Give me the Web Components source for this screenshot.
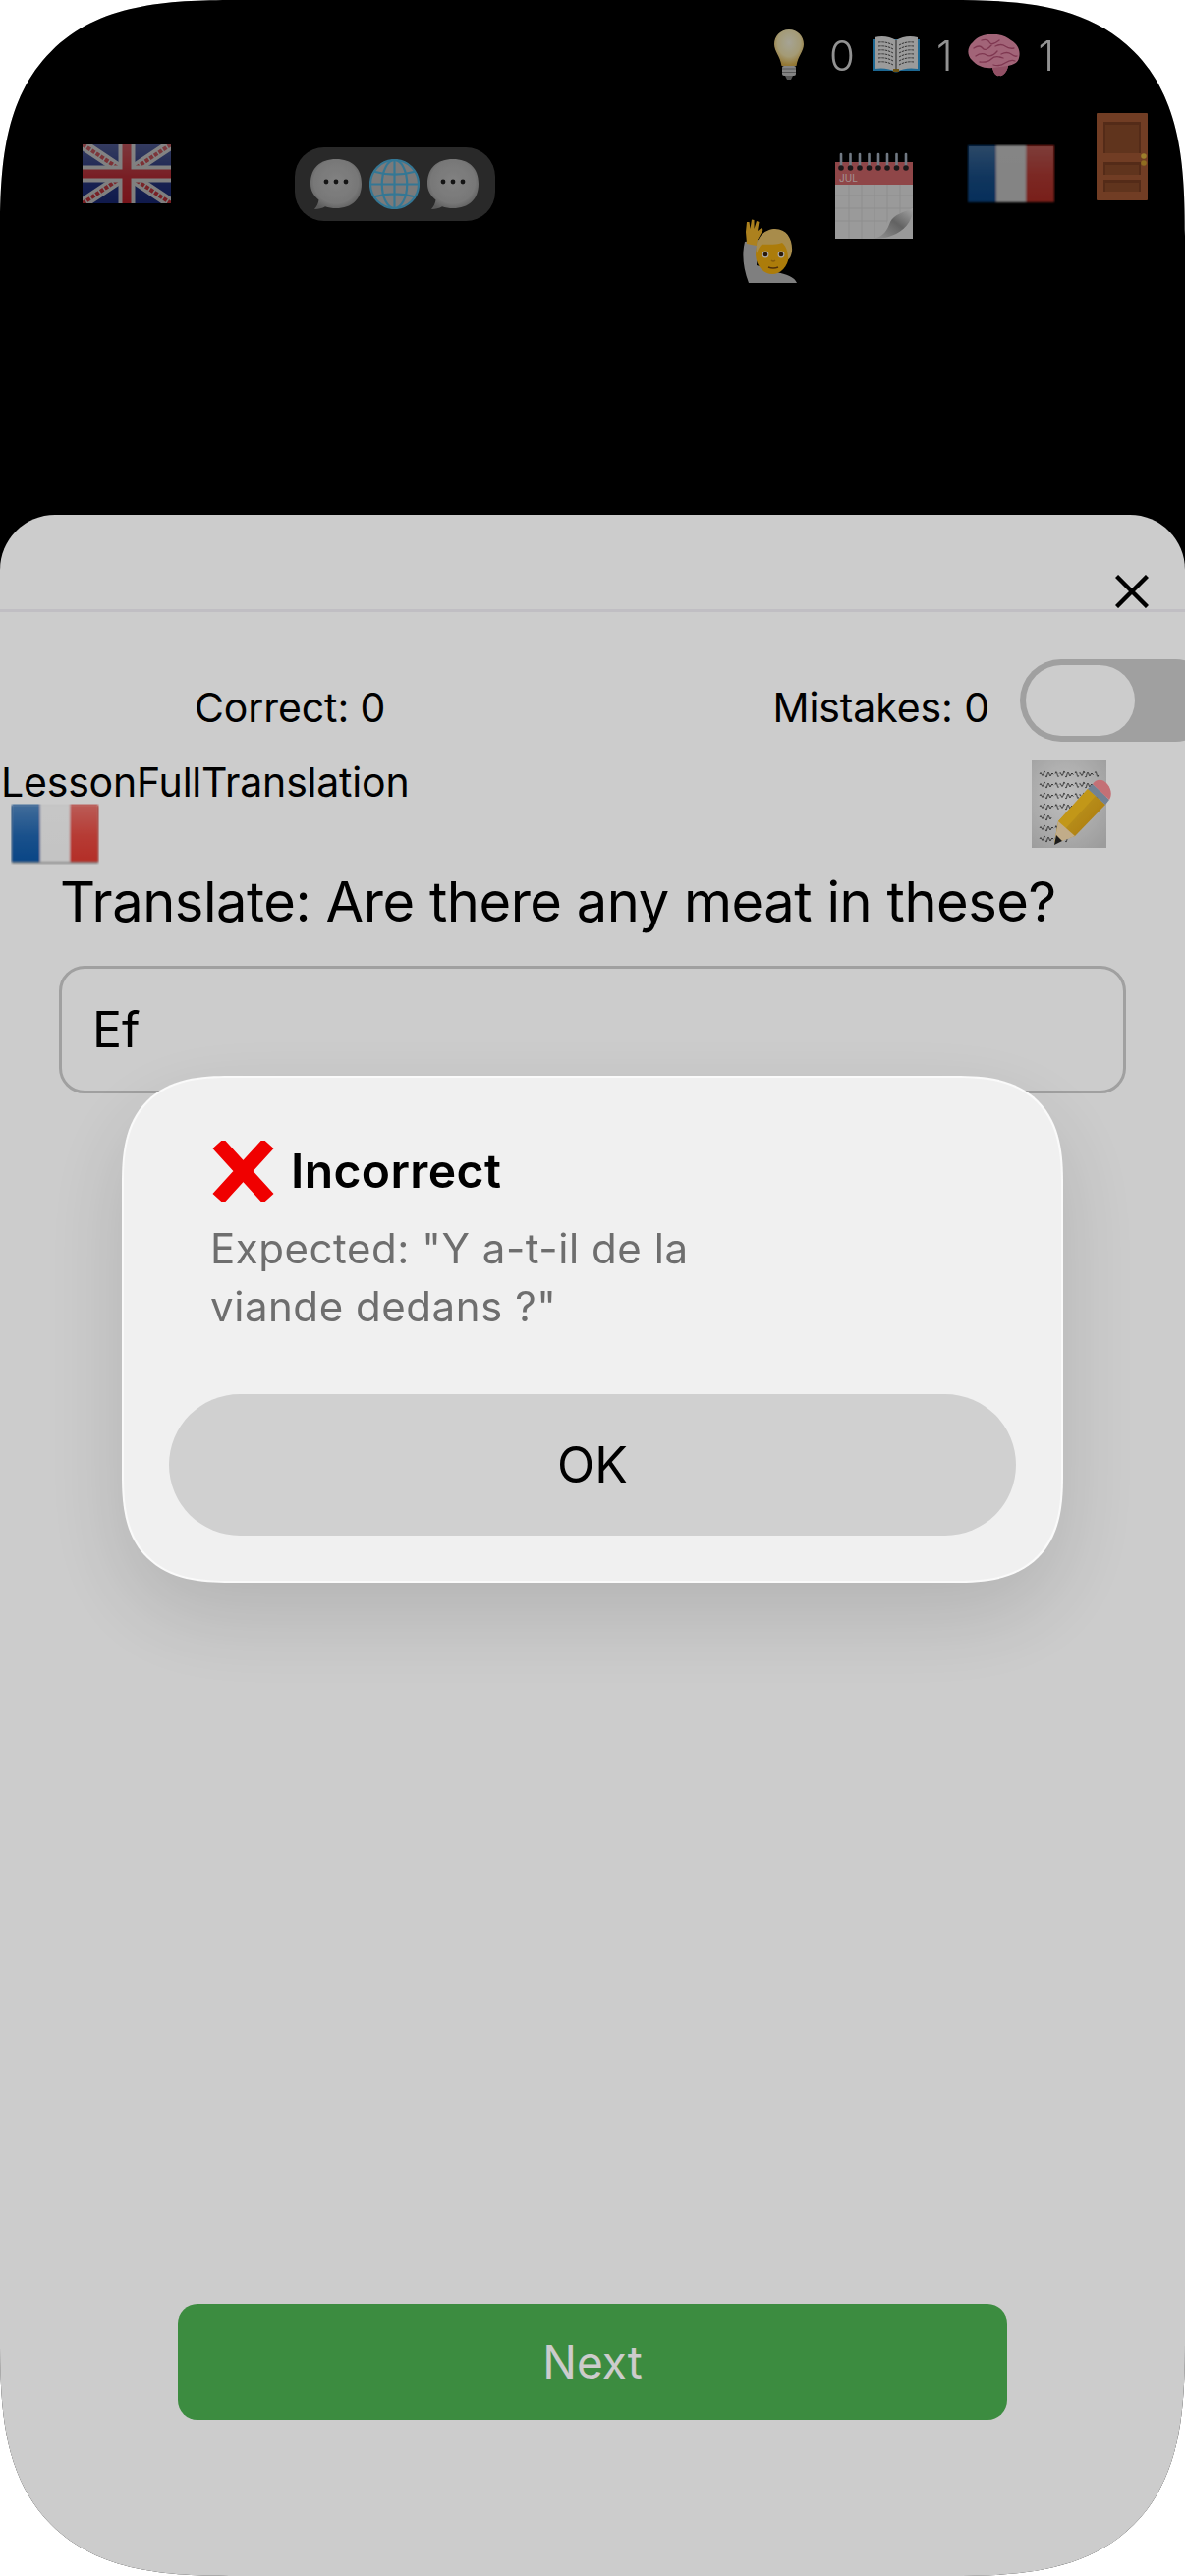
<!DOCTYPE html>
<html lang="en">
<head>
<meta charset="utf-8">
<title>Lesson</title>
<style>
  html, body { margin: 0; padding: 0; background: #fff; }
  body { width: 1206px; height: 2622px; overflow: hidden; font-family: Inter, "Liberation Sans", sans-serif; }
</style>
</head>
<body>
<app-screen>
  <top-canvas slot="top"></top-canvas>
  <lesson-sheet slot="sheet"></lesson-sheet>
  <alert-dialog slot="alert" title-text="Incorrect" ok="OK">Expected: "Y a-t-il de la viande dedans ?"</alert-dialog>
</app-screen>

<script>
const FONT = `Inter, "Liberation Sans", sans-serif`

// handwriting on the memo: wavy lines broken into words
const scribble = [14, 25, 36, 47, 58, 69, 80].map((y, i) => {
  const end = [68, 62, 66, 58, 20, 46, 34][i]
  let d = `M8 ${y}`
  for (let x = 8; x < end; x += 4) d += ` q1 -${2 + (x * 7 % 5)} 2 0 t2 0`
  return `<path d="${d}" fill="none" stroke="#262626" stroke-width=".8" stroke-dasharray="12 3 17 3 9 2"/>`
}).join('')

const calendarGrid = [14, 27, 40, 53, 66].map(x => `<path d="M${x} 34V89" stroke="#cfcfcf" stroke-width=".7"/>`).join('')
  + [45, 58, 71].map(y => `<path d="M0 ${y}H79" stroke="#cfcfcf" stroke-width=".7"/>`).join('')

const rings = [6, 15.5, 25, 34.5, 44, 53, 62.5, 72].map(x =>
  `<path d="M${x} 17V3" stroke="#a8b4c2" stroke-width="2.600" stroke-linecap="round"/><circle cx="${x}" cy="17" r="2.800" fill="#2b2426"/>`).join('')

const bubble = id => `
  <svg viewBox="0 0 52 51" width="52" height="51">
    <defs><radialGradient id="${id}" cx=".5" cy=".45" r=".6"><stop offset="0" stop-color="#c0c0c0"/><stop offset=".72" stop-color="#b2b2b2"/><stop offset="1" stop-color="#868686"/></radialGradient></defs>
    <path d="M26 0C42 0 52 9 52 25S42 50 26 50c-4 0-8 -.6 -11 -1.8C12 50 8 51 4 51c2.500 -3 4 -6 4.500 -9.500C3 37 0 31.500 0 25 0 9 10 0 26 0Z" fill="url(#${id})"/>
    <circle cx="16" cy="23" r="2.400" fill="#1e1e1e"/><circle cx="26" cy="23" r="2.400" fill="#1e1e1e"/><circle cx="36" cy="23" r="2.400" fill="#1e1e1e"/>
  </svg>`

const gloss = id => `
  <linearGradient id="${id}" x1="0" y1="0" x2="0" y2="1"><stop offset="0" stop-color="#fff" stop-opacity=".28"/><stop offset=".55" stop-color="#fff" stop-opacity=".08"/><stop offset="1" stop-color="#fff" stop-opacity="0"/></linearGradient>`

const ART = {
  uk: `<svg viewBox="0 0 90 60" width="90" height="60">
    <defs>${gloss('ukg')}</defs>
    <rect width="90" height="60" fill="#1d2f86"/>
    <path d="M0 0L90 60M90 0L0 60" stroke="#dcdcdc" stroke-width="11"/>
    <path d="M0 0L90 60M90 0L0 60" stroke="#d0343e" stroke-width="4" stroke-dasharray="4 1.500"/>
    <path d="M45 0V60M0 30H90" stroke="#dcdcdc" stroke-width="17"/>
    <path d="M45 0V60M0 30H90" stroke="#cf2530" stroke-width="9"/>
    <rect width="90" height="60" fill="url(#ukg)"/></svg>`,
  fr: `<svg viewBox="0 0 90 62" width="90" height="62">
    <defs><filter id="s" x="-5%" y="-5%" width="110%" height="110%"><feGaussianBlur stdDeviation=".9"/></filter>${gloss('frg')}</defs>
    <rect x="1" y="3" width="88" height="58" fill="#000" opacity=".3" filter="url(#s)"/>
    <g filter="url(#s)"><rect x="1" y="1" width="30" height="58" fill="#0c58a8"/><rect x="30" y="1" width="30" height="58" fill="#f6f6f6"/><rect x="60" y="1" width="29" height="58" fill="#e23a30"/></g>
    <rect x="2" y="2" width="86" height="56" fill="url(#frg)"/></svg>`,
  globe: `<svg viewBox="0 0 52 52" width="51" height="51">
    <circle cx="26" cy="26" r="25" fill="#b6b6b6"/>
    <g fill="none" stroke="#4fb0dc" stroke-width="2.200">
      <circle cx="26" cy="26" r="25"/><ellipse cx="26" cy="26" rx="13" ry="25"/><path d="M26 1V51M1 26H51M5 13Q26 19 47 13M5 39Q26 33 47 39"/>
    </g></svg>`,
  bulb: `<svg viewBox="0 0 30 51" width="30" height="51">
    <defs><radialGradient id="b" cx=".5" cy=".36" r=".62"><stop offset="0" stop-color="#f6f2dc"/><stop offset=".62" stop-color="#f3e5ae"/><stop offset="1" stop-color="#dcb24e"/></radialGradient></defs>
    <path d="M15 0C24 0 30 7 30 15C30 22 24 27 22.500 37H7.500C6 27 0 22 0 15C0 7 6 0 15 0Z" fill="url(#b)"/>
    <rect x="8" y="37" width="14" height="10" rx="2" fill="#c4c4c4"/><path d="M8 40H22M8 43.500H22" stroke="#808080" stroke-width="1"/>
    <path d="M11 47H19L17 51H13Z" fill="#808080"/></svg>`,
  book: `<svg viewBox="0 0 48 39" width="48" height="39">
    <path d="M0 4H48V36H28Q24 39 20 36H0Z" fill="#2c9ada"/>
    <path d="M2 2Q14 -1 24 5Q34 -1 46 2V34Q34 32 24 37Q14 32 2 34Z" fill="#e6e6e6"/>
    <path d="M24 5V37" stroke="#555" stroke-width="1.200"/>
    <g fill="none" stroke="#4a4a4a" stroke-width="1" stroke-dasharray="2.500 .8">
      <path d="M6 7Q14 6 21 10M6 11Q14 10 21 14M6 15Q14 14 21 18M6 19Q14 18 21 22M6 23Q14 22 21 26M6 27Q14 26 21 30"/>
      <path d="M42 7Q34 6 27 10M42 11Q34 10 27 14M42 15Q34 14 27 18M42 19Q34 18 27 22M42 23Q34 22 27 26M42 27Q34 26 27 30"/>
    </g><rect x="21" y="34" width="6" height="3" fill="#a07c20"/></svg>`,
  brain: `<svg viewBox="0 0 53 43" width="53" height="43">
    <path d="M20 0C30 -1 38 1 44 6C51 10 54 17 52 24C51 29 46 31 41 32C40 38 36 43 32 42C28 43 26 38 25 34C17 35 9 32 4 26C-1 21 -1 13 5 8C9 3 14 1 20 0Z" fill="#f095b2"/>
    <path d="M32 42C28 43 26 38 25 34L41 32C40 38 36 43 32 42Z" fill="#d87896"/>
    <g fill="none" stroke="#bc5278" stroke-width="1.300" stroke-linecap="round">
      <path d="M6 14Q12 10 15 14T24 11M8 22Q14 18 19 21T30 17M14 6Q20 4 22 8T32 6M28 12Q34 9 38 12T47 14M12 28Q20 29 24 25T36 24M34 20Q40 17 44 20T50 22M26 31Q32 33 38 29T48 27"/>
    </g></svg>`,
  door: `<svg viewBox="0 0 52 89" width="52" height="89">
    <rect width="52" height="89" rx="1" fill="#a85c36"/>
    <rect x="7" y="9" width="38" height="32" fill="#7c4024"/><rect x="9" y="12" width="34" height="29" fill="#8e4e2c"/>
    <rect x="7" y="50" width="38" height="13" fill="#7c4024"/><rect x="9" y="53" width="34" height="10" fill="#8e4e2c"/>
    <rect x="7" y="68" width="38" height="12" fill="#7c4024"/><rect x="9" y="71" width="34" height="9" fill="#8e4e2c"/>
    <circle cx="48" cy="44" r="2.800" fill="#e8bb40"/><circle cx="48" cy="51" r="2.800" fill="#d4a230"/></svg>`,
  calendar: `<svg viewBox="0 0 79 89" width="79" height="89">
    <defs><linearGradient id="c" x1="0" y1="1" x2="1" y2="0"><stop offset="0" stop-color="#e0e0e0"/><stop offset=".55" stop-color="#929292"/><stop offset="1" stop-color="#f6f6f6"/></linearGradient></defs>
    <rect y="34" width="79" height="55" fill="#e4e4e4"/>${calendarGrid}
    <rect y="11" width="79" height="23" fill="#d4686c"/>${rings}
    <text x="4" y="31" font-family="${FONT}" font-size="10" fill="#f3d9d9">JUL</text>
    <path d="M37 89C47 88 50 78 54 70C58 64 68 62 79 60V89Z" fill="#e4e4e4"/>
    <path d="M38 89C50 87 53 80 56 72C60 64 70 62 79 58C79 68 74 78 62 84C56 87 48 89 38 89Z" fill="url(#c)"/></svg>`,
  person: `<svg viewBox="0 0 55 66" width="55" height="66">
    <path d="M2 24C-1 36 0 50 6 66H55C53 60 44 57 34 55L14 48L16 22Z" fill="#bcbcbc"/>
    <path d="M4 26L3 14L4 4L6.500 4L7.500 11L9 1.500L11.500 2L11.500 11L14 3L16.500 4L15 13L19 10L20.500 12L15 22L14 28Z" fill="#ffc02e"/>
    <path d="M13 38C13 24 20 18 31 18C42 18 48 26 47 38C46 50 38 57 30 57C22 57 14 50 13 38Z" fill="#ffb810"/>
    <path d="M14 36C12 20 22 11 33 11C45 11 51 22 50 34C49 40 47 42 46 42C46 34 44 28 40 25C32 28 22 26 19 27C16 30 15 34 14 36Z" fill="#f8cf70"/>
    <circle cx="23" cy="37" r="3.400" fill="#fff"/><circle cx="23" cy="37" r="2.300" fill="#3c2410"/>
    <circle cx="39" cy="37" r="3.400" fill="#fff"/><circle cx="39" cy="37" r="2.300" fill="#3c2410"/>
    <path d="M26 50Q31 52 36 50" stroke="#7a4a10" stroke-width="1.400" fill="none"/><path d="M29 43Q31 45 33 43" stroke="#c98a10" stroke-width="1.400" fill="none"/></svg>`,
  memo: `<svg viewBox="0 0 81 89" width="81" height="89">
    <defs><radialGradient id="m" cx=".45" cy=".4" r=".75"><stop offset="0" stop-color="#f0f0f0"/><stop offset="1" stop-color="#c4c4c4"/></radialGradient>
    <linearGradient id="p" x1="0" y1="0" x2="1" y2="1"><stop offset="0" stop-color="#f7cc2c"/><stop offset="1" stop-color="#cf8f10"/></linearGradient></defs>
    <rect width="76" height="89" fill="url(#m)"/>${scribble}
    <path d="M23 84L27 62L57 29L75 45L44 77Z" fill="url(#p)"/>
    <path d="M27 62L57 29L65 36L33 71Z" fill="#f3bd1e"/>
    <path d="M23 85L27 62L44 77Z" fill="#f2d8ac"/><path d="M23 86L25 76L31 82Z" fill="#222"/>
    <path d="M57 29L62 24L79 40L75 45Z" fill="#8fa3ba"/>
    <path d="M62 24C66 18 73 19 77 24C81 29 82 35 79 40Z" fill="#f58c94"/></svg>`,
  cross: `<svg viewBox="0 0 63 62" width="63" height="62">
    <path d="M6 3L57 59M57 3L6 59" stroke="#f00000" stroke-width="15"/></svg>`,
  close: `<svg viewBox="0 0 34 34" width="34" height="34">
    <path d="M1.500 1.500L32.500 32.500M32.500 1.500L1.500 32.500" stroke="#000" stroke-width="4.400"/></svg>`
}

class EmojiArt extends HTMLElement {
  constructor () {
    super()
    this.attachShadow({ mode: 'open' })
  }

  connectedCallback () {
    this.shadowRoot.innerHTML = `
    <style>
      :host { display: block; line-height: 0; }
      svg { display: block; }
    </style>
    ${this.getAttribute('name') === 'bubble' ? bubble('bg' + (this.getAttribute('uid') || '')) : ART[this.getAttribute('name')]}
    `
  }
}

class AppScreen extends HTMLElement {
  constructor () {
    super()
    this.attachShadow({ mode: 'open' })
    this.shadowRoot.innerHTML = `
    <style>
      :host {
        display: block;
        position: relative;
        width: 1206px;
        height: 2622px;
        overflow: hidden;
        background: #000;
        border-radius: 240px;
        corner-shape: superellipse(1.5);
      }
      .stack { display: flex; flex-direction: column; height: 100%; }
      .scrim { position: absolute; inset: 0; background: rgba(0, 0, 0, .2); }
    </style>
    <div class="stack">
      <slot name="top"></slot>
      <slot name="sheet"></slot>
    </div>
    <div class="scrim"></div>
    <slot name="alert"></slot>
    `
  }
}

class TopCanvas extends HTMLElement {
  constructor () {
    super()
    this.attachShadow({ mode: 'open' })
    this.shadowRoot.innerHTML = `
    <style>
      :host { display: block; position: relative; height: 524px; flex: none; }
      .dim { position: absolute; inset: 0; opacity: .85; }
      .at { position: absolute; }
      .stats {
        position: absolute;
        left: 788px;
        top: 30px;
        display: flex;
        align-items: flex-start;
        font: 300 42px/51px ${FONT};
        color: #d8d8d8;
      }
      .stats span { margin-top: 1px; }
      .pill {
        position: absolute;
        left: 300px;
        top: 150px;
        width: 204px;
        height: 75px;
        box-sizing: border-box;
        padding: 12px 16px;
        display: flex;
        gap: 8px;
        background: #3e3e3e;
        border-radius: 30px;
      }
    </style>
    <div class="dim">
      <div class="stats">
        <emoji-art name="bulb"></emoji-art>
        <span style="margin-left: 26px; margin-right: 18px">0</span>
        <emoji-art name="book" style="margin-top: 6px"></emoji-art>
        <span style="margin-left: 17px; margin-right: 16px">1</span>
        <emoji-art name="brain" style="margin-top: 5px"></emoji-art>
        <span style="margin-left: 18px">1</span>
      </div>
      <emoji-art class="at" name="uk" style="left: 84px; top: 147px; opacity: .85"></emoji-art>
      <div class="pill">
        <emoji-art name="bubble" uid="1"></emoji-art>
        <emoji-art name="globe"></emoji-art>
        <emoji-art name="bubble" uid="2"></emoji-art>
      </div>
      <emoji-art class="at" name="person" style="left: 756px; top: 222px"></emoji-art>
      <emoji-art class="at" name="calendar" style="left: 850px; top: 154px"></emoji-art>
      <emoji-art class="at" name="fr" style="left: 984px; top: 147px; opacity: .8"></emoji-art>
      <emoji-art class="at" name="door" style="left: 1116px; top: 115px"></emoji-art>
    </div>
    `
  }
}

class ScoreToggle extends HTMLElement {
  constructor () {
    super()
    this.attachShadow({ mode: 'open' })
    this.shadowRoot.innerHTML = `
    <style>
      :host {
        display: block;
        flex: none;
        width: 200px;
        height: 84px;
        box-sizing: border-box;
        padding: 6px;
        background: #c8c8c8;
        border-radius: 42px;
      }
      .knob { width: 111px; height: 72px; background: #fff; border-radius: 36px; }
    </style>
    <div class="knob"></div>
    `
  }
}

class LessonSheet extends HTMLElement {
  constructor () {
    super()
    this.attachShadow({ mode: 'open' })
    this.shadowRoot.innerHTML = `
    <style>
      :host {
        display: flex;
        flex-direction: column;
        flex: 1;
        min-height: 0;
        overflow: hidden;
        background: #fff;
        border-radius: 56px 56px 0 0;
        font-family: ${FONT};
        color: #000;
      }
      .bar {
        flex: none;
        height: 35px;
        border-bottom: 3px solid #f0eef4;
        display: flex;
        justify-content: flex-end;
        align-items: flex-start;
        padding: 61px 37px 0 0;
      }
      .score {
        flex: none;
        display: flex;
        align-items: flex-start;
        justify-content: space-between;
        margin: 48px -32px 0 0;
        padding-left: 198px;
        font-size: 41px;
        line-height: 50px;
        letter-spacing: -.1px;
      }
      .score span { margin-top: 24px; }
      .score .right { display: flex; gap: 31px; }
      .kind {
        flex: none;
        display: flex;
        justify-content: space-between;
        margin-top: 19px;
        padding-right: 75px;
      }
      .label { font-size: 41px; line-height: 44px; letter-spacing: -.2px; padding-left: 1px; }
      .kind .fr { margin: 0 0 -2px 11px; }
      h2 {
        flex: none;
        margin: 7px 60px 0 61px;
        font-size: 56px;
        line-height: 66px;
        font-weight: 400;
        letter-spacing: -.45px;
        white-space: nowrap;
      }
      .answer {
        flex: none;
        margin: 32px 60px 0;
        height: 130px;
        box-sizing: border-box;
        border: 3px solid #c8c8c8;
        border-radius: 26px;
        padding: 0 31px;
        display: flex;
        align-items: center;
        font-size: 50px;
      }
      .next {
        flex: none;
        margin: auto 181px 159px;
        height: 118px;
        border-radius: 20px;
        background: #4caf50;
        color: #fff;
        display: flex;
        align-items: center;
        justify-content: center;
        font-size: 46px;
      }
    </style>
    <div class="bar"><emoji-art name="close"></emoji-art></div>
    <div class="score">
      <span>Correct: 0</span>
      <div class="right"><span>Mistakes: 0</span><score-toggle></score-toggle></div>
    </div>
    <div class="kind">
      <div>
        <div class="label">LessonFullTranslation</div>
        <emoji-art class="fr" name="fr"></emoji-art>
      </div>
      <emoji-art name="memo"></emoji-art>
    </div>
    <h2>Translate: Are there any meat in these?</h2>
    <div class="answer">Ef</div>
    <div class="next">Next</div>
    `
  }
}

class AlertDialog extends HTMLElement {
  constructor () {
    super()
    this.attachShadow({ mode: 'open' })
  }

  connectedCallback () {
    this.shadowRoot.innerHTML = `
    <style>
      :host {
        display: block;
        position: absolute;
        left: 124px;
        top: 1095px;
        width: 958px;
        height: 516px;
        box-sizing: border-box;
        padding: 64px 46px 47px;
        background: #f0f0f0;
        border: 2px solid #fafafa;
        border-radius: 110px;
        corner-shape: superellipse(1.4);
        box-shadow: 0 34px 90px rgba(0, 0, 0, .13);
        font-family: ${FONT};
      }
      .head { display: flex; align-items: center; gap: 17px; padding-left: 44px; color: #000; }
      .head b { font-size: 48px; font-weight: 600; letter-spacing: .4px; line-height: 62px; }
      p {
        margin: 18px 0 0;
        padding-left: 42px;
        max-width: 540px;
        font-size: 42px;
        line-height: 59px;
        letter-spacing: .55px;
        color: #6e6e6e;
        height: 132px;
      }
      .ok {
        height: 144px;
        margin-top: 46px;
        background: #d0d0d0;
        border-radius: 72px;
        display: flex;
        align-items: center;
        justify-content: center;
        font-size: 50px;
        color: #000;
      }
    </style>
    <div class="head"><emoji-art name="cross"></emoji-art><b>${this.getAttribute('title-text')}</b></div>
    <p><slot></slot></p>
    <div class="ok">${this.getAttribute('ok')}</div>
    `
  }
}

customElements.define('emoji-art', EmojiArt)
customElements.define('app-screen', AppScreen)
customElements.define('top-canvas', TopCanvas)
customElements.define('score-toggle', ScoreToggle)
customElements.define('lesson-sheet', LessonSheet)
customElements.define('alert-dialog', AlertDialog)
</script>
</body>
</html>
